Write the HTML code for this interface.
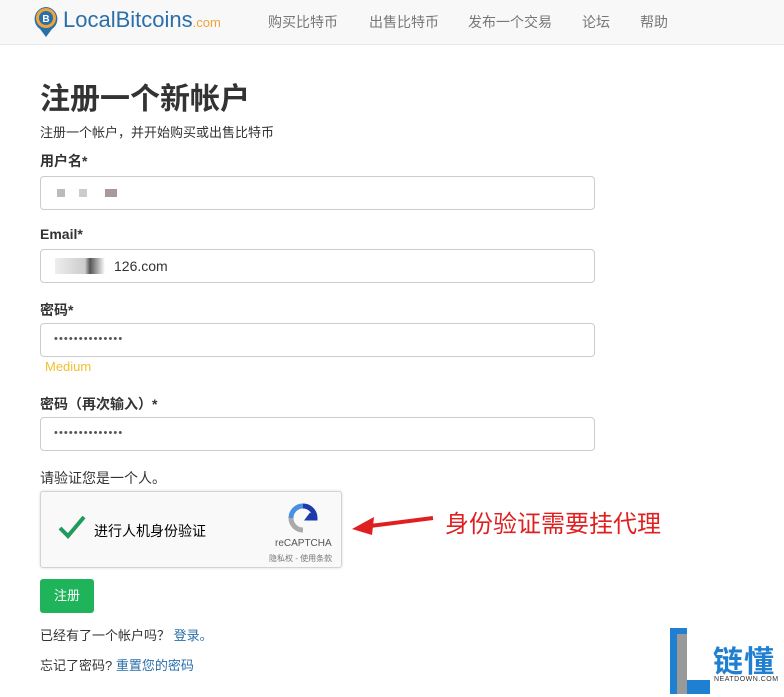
<!DOCTYPE html>
<html><head><meta charset="utf-8"><style>
body{margin:0;width:784px;height:697px;background:#fff;font-family:"Liberation Sans","Noto Sans CJK SC",sans-serif;color:#333;position:relative;overflow:hidden}
.nav{position:absolute;left:0;top:0;width:784px;height:44px;background:#f8f8f8;border-bottom:1px solid #e7e7e7}
.nav a{position:absolute;top:12px;font-size:14px;color:#777}
.abs{position:absolute}
.lbl{position:absolute;left:40px;font-size:14px;font-weight:bold;color:#333}
.inp{position:absolute;left:40px;width:553px;height:32px;border:1px solid #ccc;border-radius:4px;background:#fff}
.dots{position:absolute;left:13px;top:9px;font-size:11px;letter-spacing:1.1px;color:#555}
</style></head><body>
<div class="nav">
 <svg class="abs" style="left:33px;top:6px" width="26" height="32" viewBox="0 0 26 32"><path d="M13 1a12 12 0 0 1 6 22l-6 8-6-8a12 12 0 0 1 6-22z" fill="#2a6fa8"/><circle cx="13" cy="12" r="10" fill="#f0a53a"/><circle cx="13" cy="12" r="7" fill="#2a6fa8"/><text x="13" y="16" font-size="10" font-weight="bold" fill="#fff" text-anchor="middle" font-family="Liberation Sans">B</text></svg>
 <div class="abs" style="left:63px;top:7px;font-size:22px;color:#2a6fa8">LocalBitcoins<span style="font-size:13px;color:#f0a53a">.com</span></div>
 <a style="left:268px">购买比特币</a><a style="left:369px">出售比特币</a><a style="left:468px">发布一个交易</a><a style="left:582px">论坛</a><a style="left:640px">帮助</a>
</div>
<div class="abs" style="left:40px;top:74px;font-size:30px;font-weight:bold;color:#333">注册一个新帐户</div>
<div class="abs" style="left:40px;top:122px;font-size:13px">注册一个帐户，并开始购买或出售比特币</div>
<div class="lbl" style="top:151px">用户名*</div>
<div class="inp" style="top:176px"><div class="abs" style="left:16px;top:12px;width:80px;height:8px;background:linear-gradient(90deg,#bbb 0 8px,#fff 8px 22px,#ccc 22px 30px,#fff 30px 48px,#a99 48px 60px,#fff 60px)"></div></div>
<div class="lbl" style="top:226px">Email*</div>
<div class="inp" style="top:249px"><div class="abs" style="left:14px;top:8px;width:50px;height:16px;background:linear-gradient(90deg,#eee,#ccc 60%,#555 70%,#fff)"></div><div class="abs" style="left:73px;top:8px;font-size:14px">126.com</div></div>
<div class="lbl" style="top:300px">密码*</div>
<div class="inp" style="top:323px"><div class="dots">••••••••••••••</div></div>
<div class="abs" style="left:45px;top:359px;font-size:13px;color:#f0c030">Medium</div>
<div class="lbl" style="top:394px">密码（再次输入）*</div>
<div class="inp" style="top:417px"><div class="dots">••••••••••••••</div></div>
<div class="lbl" style="top:468px;font-weight:normal">请验证您是一个人。</div>
<div class="abs" style="left:40px;top:491px;width:300px;height:75px;border:1px solid #d3d3d3;border-radius:3px;background:#f9f9f9;box-shadow:0 0 3px #ddd">
 <svg class="abs" style="left:16px;top:22px" width="30" height="26"><path d="M3 14l8 8L27 3" stroke="#1f9c5b" stroke-width="4" fill="none"/></svg>
 <div class="abs" style="left:53px;top:29px;font-size:14px;color:#000">进行人机身份验证</div>
 <svg class="abs" style="left:245px;top:10px" width="34" height="32" viewBox="0 0 34 32"><path d="M17 4a12 12 0 0 1 12 12h-6l3-4" stroke="#1c3aa9" stroke-width="5" fill="none"/><path d="M5 16A12 12 0 0 1 17 4" stroke="#4a90e2" stroke-width="5" fill="none"/><path d="M17 28A12 12 0 0 1 5 16" stroke="#aaa" stroke-width="5" fill="none"/></svg>
 <div class="abs" style="left:234px;top:46px;font-size:10px;color:#555">reCAPTCHA</div>
 <div class="abs" style="left:228px;top:61px;font-size:8px;color:#777">隐私权 - 使用条款</div>
</div>
<svg class="abs" style="left:350px;top:508px" width="85" height="30"><path d="M83 10L20 18" stroke="#e02020" stroke-width="4"/><path d="M2 21l22-12-2 18z" fill="#e02020"/></svg>
<div class="abs" style="left:445px;top:504px;font-size:24px;color:#e02020">身份验证需要挂代理</div>
<div class="abs" style="left:40px;top:579px;width:54px;height:34px;background:#1fb45a;border-radius:3px;color:#fff;font-size:13px;text-align:center;line-height:34px">注册</div>
<div class="abs" style="left:40px;top:625px;font-size:13px">已经有了一个帐户吗？ <span style="color:#2a6fa8">登录。</span></div>
<div class="abs" style="left:40px;top:655px;font-size:13px">忘记了密码? <span style="color:#2a6fa8">重置您的密码</span></div>
<svg class="abs" style="left:670px;top:628px" width="40" height="66"><path d="M0 0h17v52h23v14H0z" fill="#1f7fd0"/><path d="M7 6l10 0v60H7z" fill="#999"/></svg>
<div class="abs" style="left:713px;top:637px;font-size:30px;font-weight:bold;color:#1f7fd0;letter-spacing:1px">链懂</div>
<div class="abs" style="left:714px;top:676px;font-size:7px;color:#333;letter-spacing:0.5px">NEATDOWN.COM</div>
</body></html>
